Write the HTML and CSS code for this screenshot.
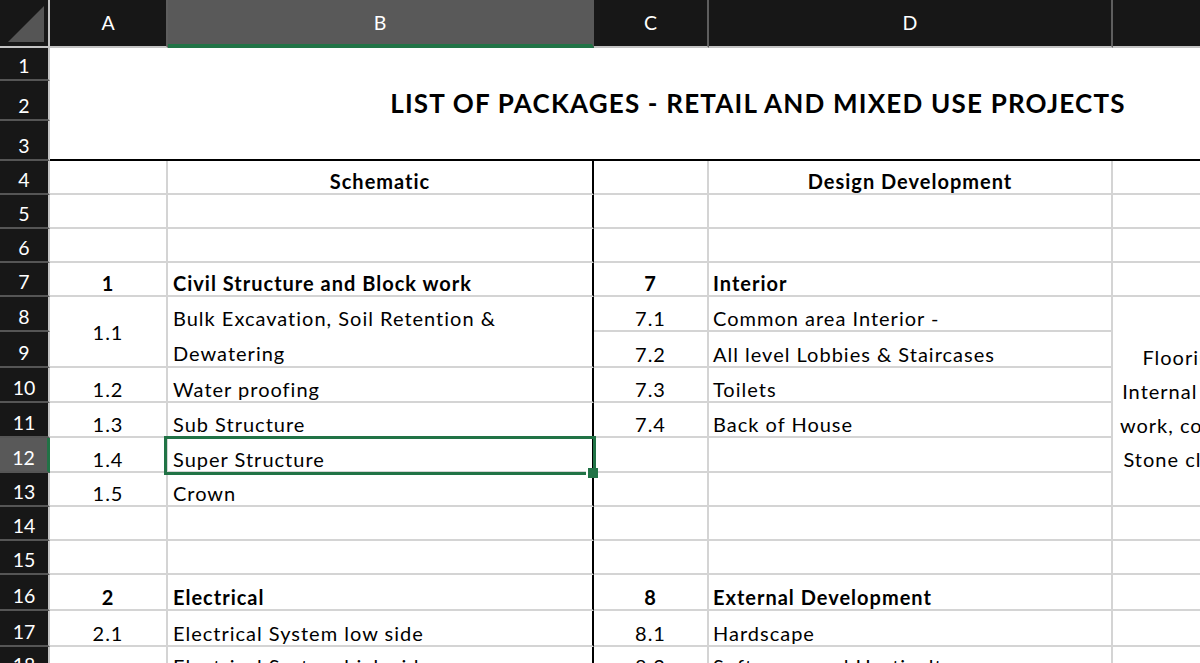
FILE: index.html
```html
<!DOCTYPE html>
<html lang="en">
<head>
  <meta charset="UTF-8">
  <meta name="viewport" content="width=device-width, initial-scale=1.0">
  <title>List of Packages</title>
  <link rel="stylesheet" href="styles.css">
</head>
<body>

<div class="sheet">
  <!-- Column headers -->
  <div class="corner">
    <svg width="48" height="46" viewBox="0 0 48 46"><polygon points="8,42 44,42 44,6" fill="#555"/></svg>
  </div>
  <div class="ch">A</div>
  <div class="ch ch-active">B</div>
  <div class="ch">C</div>
  <div class="ch">D</div>
  <div class="ch">E</div>

  <!-- Rows 1-3: title -->
  <div class="rh" style="grid-row: 2">1</div>
  <div class="rh" style="grid-row: 3">2</div>
  <div class="rh" style="grid-row: 4">3</div>
  <div class="title-block">
    <div class="title">LIST OF PACKAGES - RETAIL AND MIXED USE PROJECTS</div>
  </div>

  <!-- Row 4 -->
  <div class="rh">4</div>
  <div class="c"></div>
  <div class="c cb bold center">Schematic</div>
  <div class="c"></div>
  <div class="c bold center">Design Development</div>
  <div class="c"></div>

  <!-- Row 5 -->
  <div class="rh">5</div>
  <div class="c"></div>
  <div class="c cb"></div>
  <div class="c"></div>
  <div class="c"></div>
  <div class="c"></div>

  <!-- Row 6 -->
  <div class="rh">6</div>
  <div class="c"></div>
  <div class="c cb"></div>
  <div class="c"></div>
  <div class="c"></div>
  <div class="c"></div>

  <!-- Row 7 -->
  <div class="rh">7</div>
  <div class="c bold center">1</div>
  <div class="c cb bold">Civil Structure and Block work</div>
  <div class="c bold center">7</div>
  <div class="c bold">Interior</div>
  <div class="c"></div>

  <!-- Rows 8-13 -->
  <div class="rh">8</div>
  <div class="c center middle span2">1.1</div>
  <div class="c cb wrap span2">Bulk Excavation, Soil Retention &amp;<br>Dewatering</div>
  <div class="c center">7.1</div>
  <div class="c">Common area Interior -</div>
  <div class="c note">
    Flooring, False ceiling, Paint &amp;<br>
    Internal partitioning, Joinery, Wet,<br>
    work, counters, Vanities &amp; Mirrors,<br>
    Stone cladding &amp; Decorative work
  </div>

  <div class="rh">9</div>
  <div class="c center">7.2</div>
  <div class="c">All level Lobbies &amp; Staircases</div>

  <div class="rh">10</div>
  <div class="c center">1.2</div>
  <div class="c cb">Water proofing</div>
  <div class="c center">7.3</div>
  <div class="c">Toilets</div>

  <div class="rh">11</div>
  <div class="c center">1.3</div>
  <div class="c cb">Sub Structure</div>
  <div class="c center">7.4</div>
  <div class="c">Back of House</div>

  <div class="rh rh-active">12</div>
  <div class="c center">1.4</div>
  <div class="c cb active">Super Structure<span class="sel"></span></div>
  <div class="c"></div>
  <div class="c"></div>

  <div class="rh">13</div>
  <div class="c center">1.5</div>
  <div class="c cb">Crown</div>
  <div class="c"></div>
  <div class="c"></div>

  <!-- Row 14 -->
  <div class="rh">14</div>
  <div class="c"></div>
  <div class="c cb"></div>
  <div class="c"></div>
  <div class="c"></div>
  <div class="c"></div>

  <!-- Row 15 -->
  <div class="rh">15</div>
  <div class="c"></div>
  <div class="c cb"></div>
  <div class="c"></div>
  <div class="c"></div>
  <div class="c"></div>

  <!-- Row 16 -->
  <div class="rh">16</div>
  <div class="c bold center">2</div>
  <div class="c cb bold">Electrical</div>
  <div class="c bold center">8</div>
  <div class="c bold">External Development</div>
  <div class="c"></div>

  <!-- Row 17 -->
  <div class="rh">17</div>
  <div class="c center">2.1</div>
  <div class="c cb">Electrical System low side</div>
  <div class="c center">8.1</div>
  <div class="c">Hardscape</div>
  <div class="c"></div>

  <!-- Row 18 -->
  <div class="rh">18</div>
  <div class="c"></div>
  <div class="c cb">Electrical System high side</div>
  <div class="c center">8.2</div>
  <div class="c">Softscape and Horticulture</div>
  <div class="c"></div>
</div>

</body>
</html>
```

FILE: styles.css
```css
body {
  margin: 0;
  padding: 0;
  background-color: #fff;
  font-family: Lato, "Open Sans", sans-serif;
  overflow: hidden;
}
.sheet {
  display: grid;
  grid-template-columns: 50px 118px 426px 115px 404px 353px;
  grid-template-rows: 48px 33px 40px 40px 34px 34px 34px 34px 35px 36px 35px 35px 35px 34px 34px 34px 36px 36px 33px;
  font-size: 19.5px;
  color: #000;
}
.sheet > div {
  box-sizing: border-box;
}

/* headers */
.corner {
  background-color: #171717;
  border-right: 2px solid #c4c4c4;
  border-bottom: 2px solid #c4c4c4;
}
.corner svg {
  display: block;
}
.ch {
  background-color: #171717;
  color: #fff;
  border-right: 2px solid #5e5e5e;
  border-bottom: 2px solid #c4c4c4;
  display: flex;
  align-items: center;
  justify-content: center;
  line-height: 24px;
}
.ch-active {
  background-color: #595959;
  border-right-color: #595959;
  border-bottom: 4px solid #217346;
  padding-top: 2px;
}
.rh {
  grid-column: 1;
  background-color: #171717;
  color: #fff;
  border-right: 2px solid #c4c4c4;
  border-bottom: 2px solid #555;
  display: flex;
  align-items: flex-end;
  justify-content: center;
  line-height: 24px;
  padding-bottom: 1px;
}
.rh-active {
  background-color: #595959;
  border-right: 3px solid #217346;
}

/* title */
.title-block {
  grid-column: 2 / 7;
  grid-row: 2 / 5;
  border-bottom: 2px solid #000;
  text-align: center;
  padding-top: 40px;
}
.title {
  font-size: 26px;
  font-weight: bold;
  letter-spacing: 1.2px;
  line-height: 30px;
  white-space: nowrap;
}

/* cells */
.c {
  border-right: 2px solid #d4d4d4;
  border-bottom: 2px solid #d4d4d4;
  display: flex;
  align-items: flex-end;
  font-size: 20px;
  letter-spacing: 1px;
  line-height: 24px;
  padding-left: 4px;
  white-space: nowrap;
}
.cb {
  border-right-color: #000;
  padding-left: 5px;
}
.bold {
  font-weight: bold;
}
.center {
  justify-content: center;
  padding-left: 0;
}
.middle {
  align-items: center;
}
.span2 {
  grid-row: span 2;
}
.wrap {
  display: block;
  line-height: 35px;
  padding-top: 4px;
}
.note {
  grid-row: span 6;
  display: block;
  text-align: center;
  line-height: 34px;
  padding-top: 43px;
  padding-left: 0;
  overflow: hidden;
}
.active {
  position: relative;
}
.sel {
  position: absolute;
  top: -2px;
  left: -4px;
  width: 432px;
  height: 39px;
  border: 3px solid #217346;
  box-sizing: border-box;
  z-index: 2;
}
.sel::after {
  content: "";
  position: absolute;
  left: 421px;
  top: 29px;
  width: 10px;
  height: 10px;
  background-color: #217346;
  box-shadow: -2px 0 0 #fff;
}
```
